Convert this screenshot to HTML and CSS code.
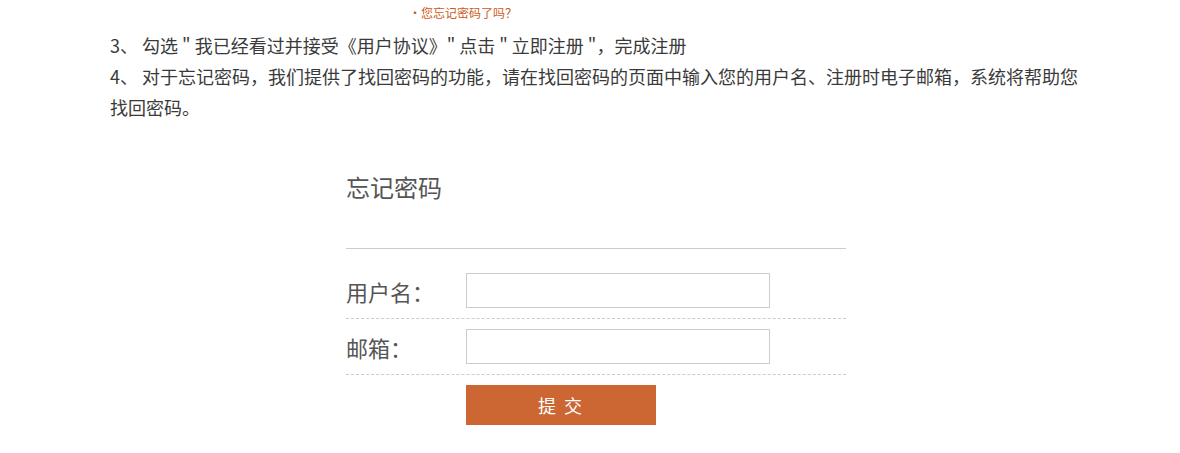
FILE: index.html
```html
<!DOCTYPE html>
<html lang="zh-CN">
<head>
    <meta charset="UTF-8">
    <meta name="viewport" content="width=device-width, initial-scale=1.0">
    <title>忘记密码</title>
    <link rel="stylesheet" href="styles.css">
</head>
<body>
    <div class="content">
        <div class="tip">·您忘记密码了吗？</div>
        <p class="step">3、 勾选 " 我已经看过并接受《用户协议》" 点击 " 立即注册 "，完成注册</p>
        <p class="step">4、 对于忘记密码，我们提供了找回密码的功能，请在找回密码的页面中输入您的用户名、注册时电子邮箱，系统将帮助您找回密码。</p>

        <form class="forget-box" onsubmit="return false;">
            <h2 class="forget-title">忘记密码</h2>
            <ul class="forget-list">
                <li class="row">
                    <label for="username">用户名：</label>
                    <input type="text" id="username" name="username">
                </li>
                <li class="row">
                    <label for="email">邮箱：</label>
                    <input type="text" id="email" name="email">
                </li>
            </ul>
            <button type="submit" class="btn-submit">提 交</button>
        </form>
    </div>
</body>
</html>
```

FILE: styles.css
```css
body {
    margin: 0;
    font-family: "Noto Sans CJK SC", "Liberation Sans", sans-serif;
    color: #3a3a3a;
    background: #fff;
}
.content {
    width: 985px;
    margin-left: 110px;
}
.tip {
    height: 30px;
    line-height: 26px;
    padding-left: 299px;
    font-size: 12px;
    color: #cc5a22;
}
.step {
    margin: 0;
    font-size: 18px;
    line-height: 31px;
}
.forget-box {
    width: 500px;
    margin: 49px 0 0 236px;
}
.forget-title {
    margin: 0;
    padding-bottom: 46px;
    border-bottom: 1px solid #ccc;
    font-size: 24px;
    font-weight: normal;
    line-height: 30px;
    color: #555;
}
.forget-list {
    list-style: none;
    margin: 0;
    padding: 14px 0 0;
}
.row {
    display: flex;
    align-items: center;
    padding: 10px 0;
    border-bottom: 1px dashed #ccc;
}
.row label {
    width: 120px;
    font-size: 22px;
    color: #555;
}
.row input {
    box-sizing: border-box;
    width: 304px;
    height: 35px;
    border: 1px solid #ccc;
    padding: 0 8px;
    font-size: 14px;
    outline: none;
}
.btn-submit {
    display: block;
    width: 190px;
    height: 40px;
    margin: 10px 0 0 120px;
    border: none;
    background-color: #cc6633;
    color: #fff;
    font-family: inherit;
    font-size: 18px;
    letter-spacing: 2px;
    cursor: pointer;
}
```
